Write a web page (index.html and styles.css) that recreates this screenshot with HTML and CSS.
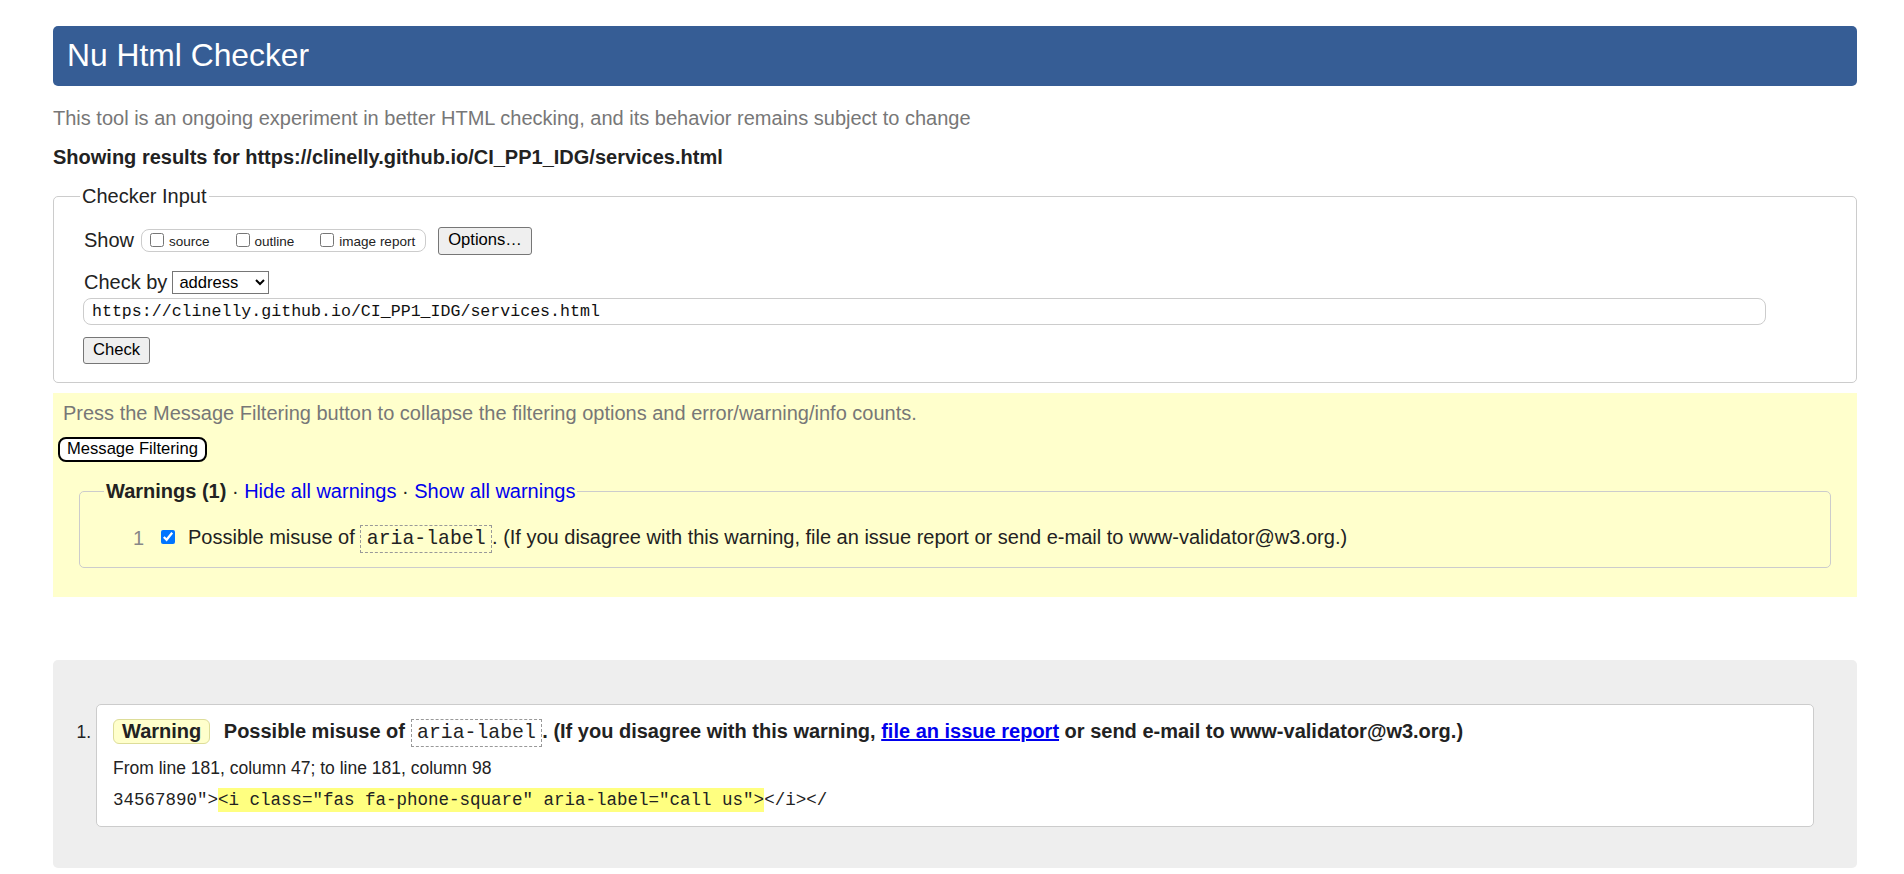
FILE: index.html
```html
<!DOCTYPE html>
<html lang="en">
<head>
<meta charset="utf-8">
<title>Nu Html Checker</title>
<link rel="stylesheet" href="styles.css">
</head>
<body>
<div class="page">
  <h1 class="title">Nu Html Checker</h1>
  <p class="subtitle">This tool is an ongoing experiment in better HTML checking, and its behavior remains subject to change</p>
  <p class="showing">Showing results for https://clinelly.github.io/CI_PP1_IDG/services.html</p>

  <fieldset class="input-box">
    <legend>Checker Input</legend>
    <div class="fields">
      <div class="row show-row">
        <span class="lbl">Show</span>
        <span class="opts">
          <label class="opt"><input type="checkbox">source</label>
          <label class="opt"><input type="checkbox">outline</label>
          <label class="opt"><input type="checkbox">image report</label>
        </span>
        <button class="btn btn-options">Options…</button>
      </div>
      <div class="row by-row">
        <span class="lbl">Check by</span>
        <select class="sel"><option>address</option></select>
      </div>
      <div class="url">https://clinelly.github.io/CI_PP1_IDG/services.html</div>
      <button class="btn btn-check">Check</button>
    </div>
  </fieldset>

  <section class="filters">
    <p class="press">Press the Message Filtering button to collapse the filtering options and error/warning/info counts.</p>
    <button class="mf">Message Filtering</button>
    <fieldset class="warnings">
      <legend><strong>Warnings (1)</strong> · <a href="#" class="lnk">Hide all warnings</a> · <a href="#" class="lnk">Show all warnings</a></legend>
      <div class="wrow">
        <span class="wnum">1</span>
        <input type="checkbox" class="wcb" checked>
        <span class="wtext">Possible misuse of <code class="attr">aria-label</code>. (If you disagree with this warning, file an issue report or send e-mail to www-validator@w3.org.)</span>
      </div>
    </fieldset>
  </section>

  <section class="results">
    <ol class="msgs">
      <li class="msg">
        <p class="msg-head"><span class="badge">Warning</span> Possible misuse of <code class="attr">aria-label</code>. (If you disagree with this warning, <a href="#" class="lnk-u">file an issue report</a> or send e-mail to www-validator@w3.org.)</p>
        <p class="loc">From line 181, column 47; to line 181, column 98</p>
        <p class="extract">34567890"&gt;<span class="hl">&lt;i class="fas fa-phone-square" aria-label="call us"&gt;</span>&lt;/i&gt;&lt;/</p>
      </li>
    </ol>
  </section>
</div>
</body>
</html>
```

FILE: styles.css
```css
html, body {
  margin: 0;
  padding: 0;
  background: #fff;
}

body {
  font-family: "Liberation Sans", Arial, sans-serif;
  color: #222;
  font-size: 20px;
  line-height: 1.15;
}

.page {
  padding: 26px 47px 7px 53px;
}

.title {
  margin: 0;
  background: #365d95;
  color: #fff;
  font-size: 31.8px;
  font-weight: normal;
  line-height: 37px;
  padding: 11px 14px 12px;
  border-radius: 5px;
}

.subtitle {
  margin: 20.6px 0 0;
  color: #777;
}

.showing {
  margin: 16.6px 0 15.4px;
  font-weight: bold;
}

.input-box {
  margin: 0;
  border: 1px solid #ccc;
  border-radius: 5px;
  padding: 19px 0 18px 26px;
}

.input-box legend {
  padding: 0 2px;
}

.fields {
  padding-left: 3px;
}

.row {
  display: flex;
  align-items: center;
}

.show-row {
  height: 28px;
}

.lbl {
  margin-left: 1px;
}

.opts {
  display: inline-flex;
  align-items: center;
  height: 21px;
  margin-left: 7px;
  padding: 0 10px 0 8px;
  border: 1px solid #ccc;
  border-radius: 8px;
}

.opt {
  display: inline-flex;
  align-items: center;
  font-size: 13.5px;
  margin-right: 26px;
  padding-top: 3px;
}

.opt:last-child {
  margin-right: 0;
}

.opt input {
  width: 14px;
  height: 14px;
  margin: -5px 5px 0 0;
}

.btn {
  font-family: "Liberation Sans", Arial, sans-serif;
  font-size: 16.6px;
  color: #000;
  background: #efefef;
  border: 1px solid #767676;
  border-radius: 3px;
  padding: 0 9px;
  line-height: 1;
}

.btn-options {
  height: 28px;
  margin-left: 12px;
}

.by-row {
  margin-top: 16px;
  height: 23px;
}

.sel {
  font-family: "Liberation Sans", Arial, sans-serif;
  font-size: 16.6px;
  width: 97px;
  height: 23px;
  margin-left: 5px;
  color: #000;
  background: #fff;
  border: 1px solid #767676;
  border-radius: 0;
  padding: 0 0 0 2px;
}

.url {
  margin-top: 4px;
  width: calc(95% - 1px);
  box-sizing: border-box;
  height: 27px;
  border: 1px solid #ccc;
  border-radius: 8px;
  padding: 0 8px;
  font-family: "Liberation Mono", "Courier New", monospace;
  font-size: 16.6px;
  line-height: 25px;
  color: #111;
}

.btn-check {
  display: block;
  margin-top: 12px;
  height: 27px;
}

.filters {
  margin-top: 10px;
  background: #ffc;
  padding: 0 0 29px;
}

.press {
  margin: 0;
  padding: 9.5px 10px 0;
  color: #777;
}

.mf {
  display: block;
  margin: 12px 0 0 5px;
  height: 25px;
  font-family: "Liberation Sans", Arial, sans-serif;
  font-size: 16.6px;
  color: #000;
  background: #fff;
  border: 2px solid #000;
  border-radius: 8px;
  padding: 0 7px;
  line-height: 1;
}

.warnings {
  margin: 17.5px 26px 0;
  border: 1px solid #ccc;
  border-radius: 5px;
  padding: 23px 0 16px 24px;
}

.warnings legend {
  padding: 0 2px;
}

.lnk {
  color: #00e;
  text-decoration: none;
}

.wrow {
  display: flex;
  align-items: center;
  padding-left: 29px;
  line-height: 23px;
}

.wnum {
  color: #888;
  width: 11px;
}

.wcb {
  width: 14px;
  height: 14px;
  margin: -3px 13px 0 17px;
}

code.attr {
  font-family: "Liberation Mono", "Courier New", monospace;
  font-size: 19.8px;
  border: 1px dashed #999;
  padding: 2px 5.5px;
  font-weight: normal;
}

.results {
  margin-top: 63px;
  background: #eee;
  border-radius: 5px;
  padding: 44px 43px 41px;
}

.msgs {
  margin: 0;
  padding: 0;
  list-style: decimal outside;
  font-size: 17.5px;
}

.msg {
  background: #fff;
  border: 1px solid #ccc;
  border-radius: 5px;
  padding: 13px 16px 16px;
}

.msg-head {
  margin: 0;
  font-size: 20px;
  font-weight: bold;
  line-height: 26px;
}

.badge {
  display: inline-block;
  background: #ffc;
  border: 1px solid #dd9;
  border-radius: 6px;
  padding: 0 8px;
  line-height: 23px;
  margin-right: 8px;
}

.lnk-u {
  color: #00e;
  text-decoration: underline;
}

.loc {
  margin: 12px 0 0;
  line-height: 20px;
}

.extract {
  margin: 12px 0 0;
  font-family: "Liberation Mono", "Courier New", monospace;
  font-size: 17.5px;
  line-height: 20px;
}

.hl {
  background: #ffff80;
  padding: 2px 0;
}
```
